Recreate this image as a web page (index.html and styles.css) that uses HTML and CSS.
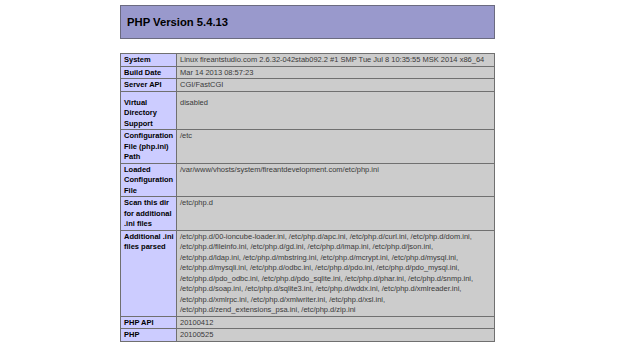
FILE: index.html
```
<!DOCTYPE html>
<html>
<head>
<meta charset="utf-8">
<title>phpinfo()</title>
<link rel="stylesheet" href="styles.css">
</head>
<body>
<div class="page">
  <div class="head">
    <h1 class="title">PHP Version 5.4.13</h1>
  </div>
  <table class="info">
    <colgroup><col class="col-e"><col class="col-v"></colgroup>
    <tr><td class="e">System</td><td class="v">Linux fireantstudio.com 2.6.32-042stab092.2 #1 SMP Tue Jul 8 10:35:55 MSK 2014 x86_64</td></tr>
    <tr><td class="e">Build Date</td><td class="v">Mar 14 2013 08:57:23</td></tr>
    <tr><td class="e">Server API</td><td class="v">CGI/FastCGI</td></tr>
    <tr class="tall"><td class="e">Virtual<br>Directory<br>Support</td><td class="v">disabled</td></tr>
    <tr><td class="e">Configuration<br>File (php.ini)<br>Path</td><td class="v">/etc</td></tr>
    <tr><td class="e">Loaded<br>Configuration<br>File</td><td class="v">/var/www/vhosts/system/fireantdevelopment.com/etc/php.ini</td></tr>
    <tr><td class="e">Scan this dir<br>for additional<br>.ini files</td><td class="v">/etc/php.d</td></tr>
    <tr><td class="e">Additional .ini<br>files parsed</td><td class="v">/etc/php.d/00-ioncube-loader.ini, /etc/php.d/apc.ini, /etc/php.d/curl.ini, /etc/php.d/dom.ini,<br>/etc/php.d/fileinfo.ini, /etc/php.d/gd.ini, /etc/php.d/imap.ini, /etc/php.d/json.ini,<br>/etc/php.d/ldap.ini, /etc/php.d/mbstring.ini, /etc/php.d/mcrypt.ini, /etc/php.d/mysql.ini,<br>/etc/php.d/mysqli.ini, /etc/php.d/odbc.ini, /etc/php.d/pdo.ini, /etc/php.d/pdo_mysql.ini,<br>/etc/php.d/pdo_odbc.ini, /etc/php.d/pdo_sqlite.ini, /etc/php.d/phar.ini, /etc/php.d/snmp.ini,<br>/etc/php.d/soap.ini, /etc/php.d/sqlite3.ini, /etc/php.d/wddx.ini, /etc/php.d/xmlreader.ini,<br>/etc/php.d/xmlrpc.ini, /etc/php.d/xmlwriter.ini, /etc/php.d/xsl.ini,<br>/etc/php.d/zend_extensions_psa.ini, /etc/php.d/zip.ini</td></tr>
    <tr><td class="e">PHP API</td><td class="v">20100412</td></tr>
    <tr><td class="e">PHP</td><td class="v">20100525</td></tr>
  </table>
</div>
</body>
</html>
```

FILE: styles.css
```
html, body {
  margin: 0;
  padding: 0;
  background: #ffffff;
}
body {
  font-family: "Liberation Sans", Arial, sans-serif;
  color: #000;
}
.page {
  width: 615px;
  padding-top: 5px;
  display: flex;
  flex-direction: column;
  align-items: center;
}
.head {
  box-sizing: border-box;
  width: 375px;
  height: 34px;
  background: #9999cc;
  border: 1px solid #6b6b80;
  display: flex;
  align-items: center;
  padding-left: 6px;
}
.title {
  margin: 0;
  font-size: 11.25px;
  font-weight: bold;
  color: #000;
}
.info {
  margin-top: 14px;
  width: 375px;
  border-collapse: collapse;
  table-layout: fixed;
}
.col-e { width: 56px; }
.info td {
  border: 1px solid #707070;
  padding: 1px 2px 0 3px;
  vertical-align: top;
  font-size: 7.5px;
  line-height: 10.5px;
  white-space: nowrap;
  overflow: hidden;
}
.e {
  background: #ccccff;
  font-weight: bold;
  color: #000;
}
.v {
  background: #cccccc;
  color: #3a3a3a;
}
.tall td {
  padding-top: 6px;
}
```
